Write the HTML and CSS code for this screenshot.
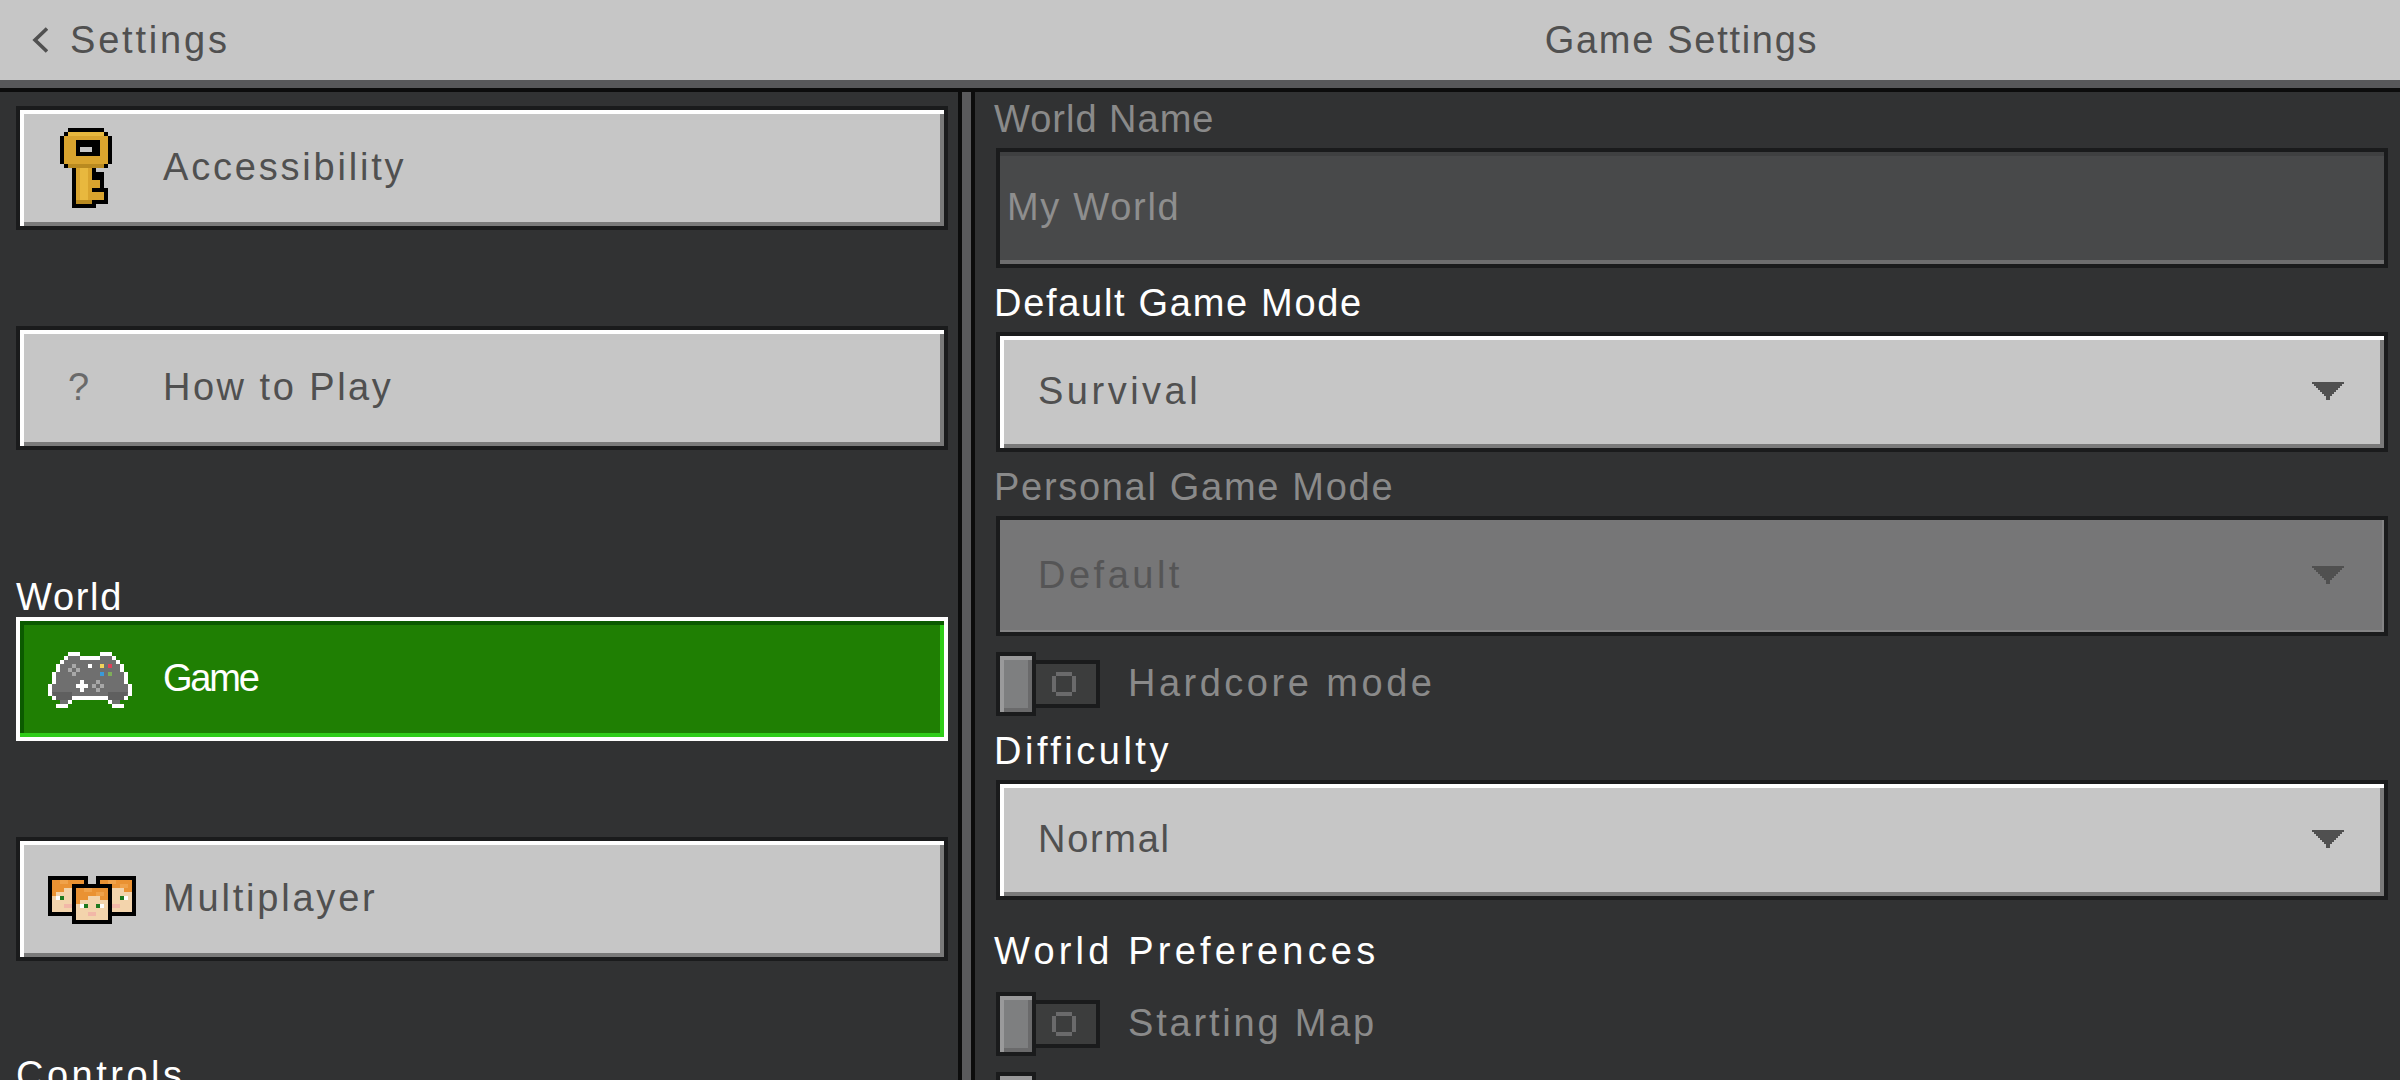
FILE: index.html
```html
<!DOCTYPE html>
<html lang="en">
  <head>
    <meta charset="UTF-8" />
    <title>Game Settings</title>
    <link rel="stylesheet" href="styles.css">
  </head>

  <body>
    <svg class="defs" width="0" height="0">
      <symbol id="alex" viewBox="0 0 10 10" shape-rendering="crispEdges">
        <path fill="#000" d="M0 0h10v10H0z" />
        <path fill="#f3d4ac" d="M1 1h8v8H1z" />
        <path fill="#ea9233" d="M1 1h8v3H7V3H4v1H2v1H1z" />
        <path fill="#f0a24a" d="M3 1h2v1H3zM6 2h2v1H6z" />
        <path fill="#fff" d="M2 5h1v1H2zM7 5h1v1H7z" />
        <path fill="#1f7a1f" d="M3 5h1v1H3zM6 5h1v1H6z" />
        <path fill="#f2b8a8" d="M4 7h2v1H4z" />
      </symbol>
      <symbol id="arrow" viewBox="0 0 16 9" shape-rendering="crispEdges">
        <path d="M0 0h16v1h-1v1h-1v1h-1v1h-1v1h-1v1h-1v1H9v2H7V7H6V6H5V5H4V4H3V3H2V2H1V1H0z" />
      </symbol>
    </svg>

    <header class="topbar">
      <div class="back">
        <svg class="chevron" viewBox="0 0 16 26">
          <path fill="none" stroke="#505050" stroke-width="3.6" d="M15 1.5 3 13l12 11.5" />
        </svg>
        <span class="nudge">Settings</span>
      </div>
      <div class="title tight">Game Settings</div>
    </header>

    <main class="panels">
      <nav class="side">
        <div class="side-btn">
          <span class="side-icon">
            <svg class="icon-key" viewBox="0 0 13 20" shape-rendering="crispEdges">
              <path fill="#000" d="M2 0h9v1h1v1h1v7h-1v1H9v1h2v4h1v4H9v1H3V10H1V9H0V2h1V1h1z" />
              <path fill="#d9a42e" d="M2 1h9v1h1v7h-1v1H2V9H1V2h1zM4 10h4v9H4zM8 13h2v2H8zM8 16h3v2H8z" />
              <path fill="#e8b83e" d="M2 1h9v1H2zM5 10h2v8H5z" />
              <path fill="#b98a20" d="M2 9h9v1H2zM4 18h4v1H4z" />
              <path fill="#000" d="M4 3h6v4H4z" />
              <path fill="#c6c6c6" d="M5 4.75h3v1.25H5z" />
            </svg>
          </span>
          <span class="nudge">Accessibility</span>
        </div>
        <div class="side-btn">
          <span class="side-icon help">?</span>
          <span>How to Play</span>
        </div>

        <div class="side-label section-first tight">World</div>
        <div class="side-btn active">
          <span class="side-icon">
            <svg class="icon-pad" viewBox="0 0 21 14" shape-rendering="crispEdges">
              <path fill="#6f6f6f" d="M5 1h3v1h5V1h3v1h1v1h1v2h1v3h1v3h-1v1h-1v1h-2v-1h-1v-1H6v1H5v1H3v-1H2v-1H1V8h1V5h1V3h1V2h1z" />
              <path fill="#5f5f5f" d="M1 10h5v2H2zM15 10h5l-1 2h-4z" />
              <path fill="#fff" d="M5 0h3v1H5zM13 0h3v1h-3zM4 1h1v1H4zM8 1h5v1H8zM16 1h1v1h-1zM3 2h1v1H3zM17 2h1v1h-1zM2 3h1v2H2zM18 3h1v2h-1zM1 5h1v3H1zM19 5h1v3h-1zM0 8h1v3H0zM20 8h1v3h-1zM1 11h1v1H1zM19 11h1v1h-1zM6 11h9v1H6zM5 12h1v1H5zM15 12h1v1h-1zM2 13h3v1H2zM16 13h3v1h-3zM10 3h1v1h-1zM8 7h1v1H8zM7 8h3v1H7zM8 9h1v1H8z" />
              <path fill="#a8a8a8" d="M6 3h1v1H6zM5 4h1v1H5zM7 4h1v1H7zM6 5h1v1H6zM12 7h1v1h-1zM11 8h1v1h-1zM13 8h1v1h-1zM12 9h1v1h-1z" />
              <path fill="#f2d35a" d="M13 3h1v1h-1z" />
              <path fill="#e0405a" d="M15 3h1v1h-1z" />
              <path fill="#3a9ad9" d="M13 5h1v1h-1z" />
              <path fill="#7fae5a" d="M15 5h1v1h-1z" />
            </svg>
          </span>
          <span class="squeezed">Game</span>
        </div>
        <div class="side-btn">
          <span class="side-icon">
            <svg class="icon-heads" viewBox="0 0 22 12">
              <use href="#alex" x="0" y="0" width="10" height="10" />
              <use href="#alex" x="12" y="0" width="10" height="10" />
              <use href="#alex" x="6" y="2" width="10" height="10" />
            </svg>
          </span>
          <span class="nudge">Multiplayer</span>
        </div>

        <div class="side-label loose">Controls</div>
      </nav>

      <section class="form">
        <div class="field-label dim very-tight">World Name</div>
        <div class="text-input"><span class="tight">My World</span></div>

        <div class="field-label tight">Default Game Mode</div>
        <div class="select">
          <span class="loose">Survival</span>
          <svg class="arrow"><use href="#arrow" /></svg>
        </div>

        <div class="field-label dim tight">Personal Game Mode</div>
        <div class="select disabled">
          <span class="loose">Default</span>
          <svg class="arrow"><use href="#arrow" /></svg>
        </div>

        <div class="toggle-row first">
          <div class="toggle"><span class="thumb"></span><span class="track"><i class="ring"></i></span></div>
          <span class="toggle-text loose">Hardcore mode</span>
        </div>

        <div class="field-label loose">Difficulty</div>
        <div class="select">
          <span class="tight">Normal</span>
          <svg class="arrow"><use href="#arrow" /></svg>
        </div>

        <div class="field-label group very-loose">World Preferences</div>
        <div class="toggle-row">
          <div class="toggle"><span class="thumb"></span><span class="track"><i class="ring"></i></span></div>
          <span class="toggle-text nudge">Starting Map</span>
        </div>
        <div class="toggle-row">
          <div class="toggle"><span class="thumb"></span><span class="track"><i class="ring"></i></span></div>
        </div>
      </section>
    </main>
  </body>
</html>
```

FILE: styles.css
```css
* {
  box-sizing: border-box;
}

html,
body {
  height: 100%;
}

body {
  margin: 0;
  overflow: hidden;
  display: flex;
  flex-direction: column;
  background-color: #313233;
  font-family: "Liberation Sans", Arial, sans-serif;
  font-size: 38px;
  letter-spacing: 2.5px;
  line-height: 44px;
  color: #505050;
}

.defs {
  position: absolute;
}

/* the pixel font is wider or narrower than Arial depending on the word */
.squeezed {
  letter-spacing: -2.2px;
}

.very-tight {
  letter-spacing: 1px;
}

.tight {
  letter-spacing: 1.7px;
}

.nudge {
  letter-spacing: 2.8px;
}

.loose {
  letter-spacing: 3.5px;
}

.very-loose {
  letter-spacing: 4.2px;
}

/* top bar */
.topbar {
  flex: none;
  display: flex;
  height: 92px;
  background-color: #c6c6c6;
  border-bottom: 4px solid #0c0c0c;
  box-shadow: inset 0 -8px 0 #58585a;
}

.back {
  width: 975px;
  display: flex;
  align-items: center;
  gap: 22px;
  padding: 0 0 8px 32px;
}

.chevron {
  width: 16px;
  height: 26px;
}

.title {
  flex: 1;
  display: flex;
  justify-content: center;
  align-items: center;
  padding: 0 12px 8px 0;
}

/* two panels */
.panels {
  flex: 1;
  display: flex;
  min-height: 0;
}

.side {
  width: 975px;
  flex: none;
  padding: 14px 0 0 16px;
  overflow: hidden;
  position: relative;
}

.side::after {
  content: "";
  position: absolute;
  top: 0;
  bottom: 0;
  right: 0;
  width: 9px;
  background-color: #5a5a5c;
  border-left: 4px solid #0c0c0c;
  border-right: 4px solid #0c0c0c;
}

.side-btn {
  display: flex;
  align-items: center;
  height: 124px;
  width: 932px;
  margin-bottom: 96px;
  padding: 0 0 2px 143px;
  background-color: #c6c6c6;
  border: 4px solid #1a1b1c;
  box-shadow: inset 4px 4px 0 #fff, inset -4px -4px 0 #7a7a7a;
  position: relative;
}

.side-icon {
  position: absolute;
  left: 0;
  top: 0;
  display: block;
}

.icon-key {
  position: absolute;
  left: 40px;
  top: 18px;
  width: 52px;
  height: 80px;
}

.icon-pad {
  position: absolute;
  left: 28px;
  top: 31px;
  width: 84px;
  height: 56px;
}

.icon-heads {
  position: absolute;
  left: 28px;
  top: 35px;
  width: 88px;
  height: 48px;
}

.help {
  left: 48px;
  top: 35px;
  color: #6a6a6a;
}

.side-label {
  height: 38px;
  color: #fff;
  line-height: 36px;
}

/* collapses with the 96px under the button above */
.side-label.section-first {
  margin-top: 129px;
}

.side-btn.active {
  color: #fff;
  background-color: #1f7f03;
  border-color: #fff;
  box-shadow: inset 0 4px 0 #0b5a00, inset 0 -4px 0 #2fcc18, inset 4px 0 0 #0b5a00, inset -4px 0 0 #2fcc18;
}

/* right form */
.form {
  flex: 1;
  min-width: 0;
  padding: 0 12px 0 19px;
  overflow: hidden;
}

.field-label {
  height: 64px;
  padding-top: 13px;
  line-height: 44px;
  color: #fff;
  white-space: nowrap;
}

.field-label.dim {
  color: #8a8a8a;
}

.text-input,
.select {
  display: flex;
  align-items: center;
  justify-content: space-between;
  height: 120px;
  margin-left: 2px;
  border: 4px solid #1a1b1c;
}

.text-input {
  padding: 0 0 2px 7px;
  background-color: #48494a;
  box-shadow: inset 0 4px 0 #3f4041, inset 0 -4px 0 #6d6d6e;
  color: #8e8e8e;
}

.form > .field-label:first-child {
  height: 56px;
  padding-top: 5px;
}

.select {
  padding: 0 40px 2px 38px;
  background-color: #c6c6c6;
  box-shadow: inset 4px 4px 0 #fff, inset -4px -4px 0 #7a7a7a;
}

.select.disabled {
  background-color: #767677;
  box-shadow: inset -2px -2px 0 #848485;
  color: #555556;
}

.arrow {
  width: 32px;
  height: 18px;
  fill: #505050;
}

.toggle-row {
  display: flex;
  align-items: center;
  gap: 28px;
  height: 64px;
  margin: 16px 0 0 2px;
}

.toggle-text {
  color: #8a8a8a;
  padding-bottom: 2px;
}

.toggle {
  display: flex;
  align-items: center;
  width: 104px;
  height: 64px;
  flex: none;
}

.thumb {
  width: 40px;
  height: 64px;
  background-color: #7e7f80;
  border: 4px solid #1a1b1c;
  box-shadow: inset 0 4px 0 #9a9a9b, inset 4px 0 0 #9a9a9b, inset 0 -4px 0 #6a6a6b, inset -4px 0 0 #6a6a6b;
}

.track {
  display: flex;
  align-items: center;
  width: 64px;
  height: 48px;
  padding-left: 16px;
  background-color: #3c3d3d;
  border: 4px solid #1a1b1c;
  border-left: none;
}

.ring {
  display: block;
  width: 24px;
  height: 24px;
  flex: none;
  border: 4px solid #6a6a6b;
  clip-path: polygon(4px 0, 20px 0, 20px 4px, 24px 4px, 24px 20px, 20px 20px, 20px 24px, 4px 24px, 4px 20px, 0 20px, 0 4px, 4px 4px);
}

.field-label.group {
  height: 92px;
  padding-top: 29px;
}

.field-label.group + .toggle-row {
  margin-top: 0;
}
```
